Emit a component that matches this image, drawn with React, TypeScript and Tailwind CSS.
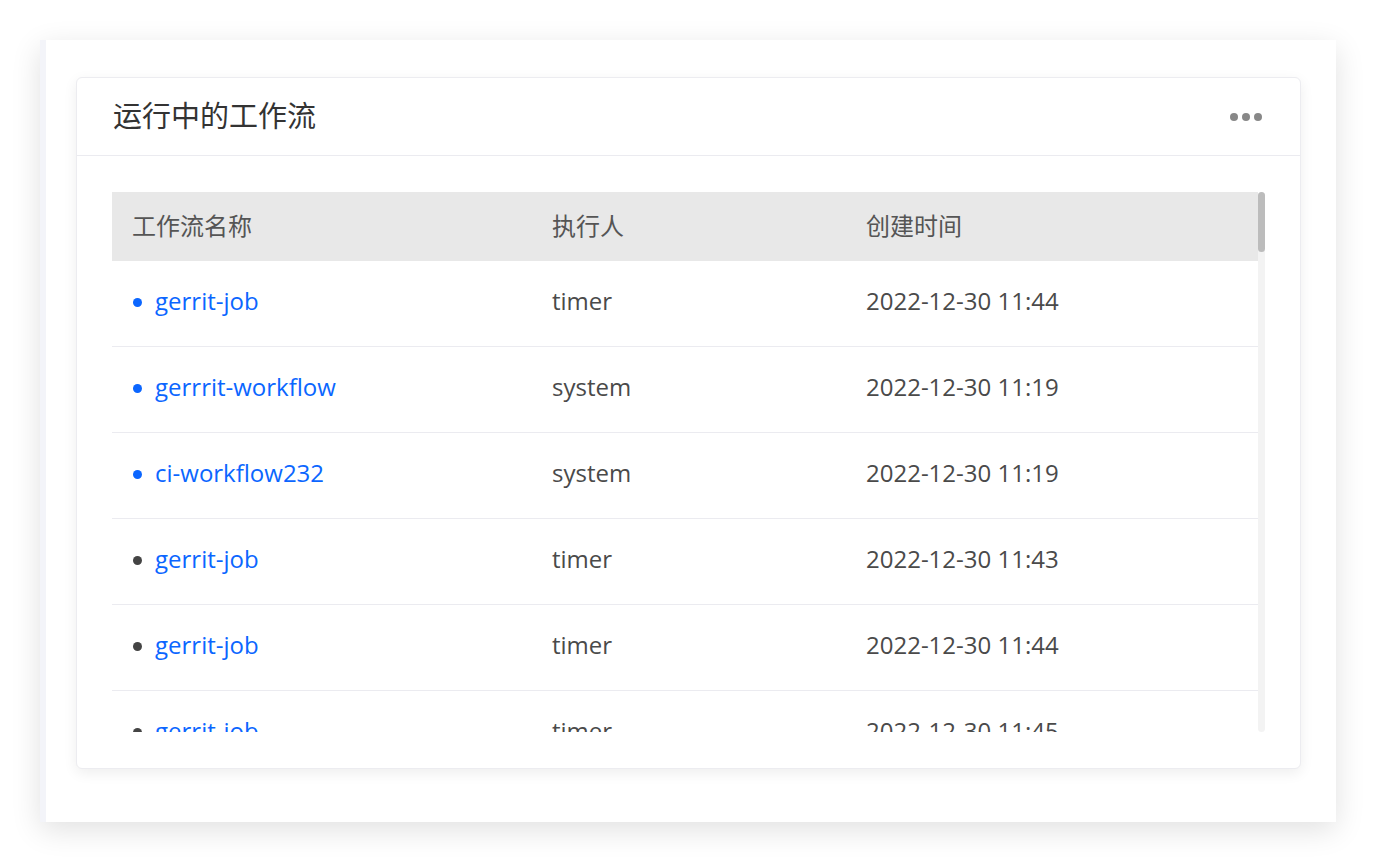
import React from 'react';

type Row = { name: string; user: string; time: string; running: boolean };

const rows: Row[] = [
  { name: 'gerrit-job', user: 'timer', time: '2022-12-30 11:44', running: true },
  { name: 'gerrrit-workflow', user: 'system', time: '2022-12-30 11:19', running: true },
  { name: 'ci-workflow232', user: 'system', time: '2022-12-30 11:19', running: true },
  { name: 'gerrit-job', user: 'timer', time: '2022-12-30 11:43', running: false },
  { name: 'gerrit-job', user: 'timer', time: '2022-12-30 11:44', running: false },
  { name: 'gerrit-job', user: 'timer', time: '2022-12-30 11:45', running: false },
];

const font = { fontFamily: '"Open Sans", "Noto Sans CJK SC", sans-serif' };

const App: React.FC = () => {
  return (
    <div className="w-[1376px] h-[862px] bg-white p-[40px]" style={font}>
      <div className="w-[1296px] h-[782px] bg-white border-l-[6px] border-[#f3f4f9] shadow-[0_8px_28px_rgba(0,0,0,0.12)] pl-[30px] pr-[35px] pt-[37px]">
        <div className="h-[692px] bg-white rounded-[6px] border border-[#ececf0] shadow-[0_4px_14px_rgba(0,0,0,0.07)] flex flex-col">
          {/* header */}
          <div className="h-[78px] shrink-0 flex items-center justify-between pl-[36px] pr-[38px] border-b border-[#ebebf0]">
            <h2 className="text-[29px] font-normal text-[#333] leading-none pb-[2px]">运行中的工作流</h2>
            <div className="flex gap-[4px]">
              <span className="w-[8px] h-[8px] rounded-full bg-[#888]" />
              <span className="w-[8px] h-[8px] rounded-full bg-[#888]" />
              <span className="w-[8px] h-[8px] rounded-full bg-[#888]" />
            </div>
          </div>

          {/* body */}
          <div className="flex pl-[35px] pr-[35px] pt-[36px]">
            <div className="flex-1 h-[540px] overflow-hidden">
              <div className="h-[69px] bg-[#e8e8e8] flex items-center text-[24px] text-[#555] pb-[2px]">
                <div className="w-[440px] pl-[20px]">工作流名称</div>
                <div className="w-[314px]">执行人</div>
                <div className="flex-1">创建时间</div>
              </div>
              {rows.map((r, i) => (
                <div key={i} className="h-[86px] flex items-center border-b border-[#ebebf0] text-[24px] pb-[5px]">
                  <div className="w-[440px] pl-[21px] flex items-center gap-[13px]">
                    <span className={`w-[9px] h-[9px] mt-[3px] rounded-full ${r.running ? 'bg-[#0b66ff]' : 'bg-[#444]'}`} />
                    <span className="text-[#0b66ff]">{r.name}</span>
                  </div>
                  <div className="w-[314px] text-[#4a4a4a]">{r.user}</div>
                  <div className="flex-1 text-[#4a4a4a]">{r.time}</div>
                </div>
              ))}
            </div>
            <div className="w-[7px] h-[540px] bg-[#f3f3f3] rounded-[4px]">
              <div className="h-[60px] bg-[#bcbcbc] rounded-[4px]" />
            </div>
          </div>
        </div>
      </div>
    </div>
  );
};

export default App;
